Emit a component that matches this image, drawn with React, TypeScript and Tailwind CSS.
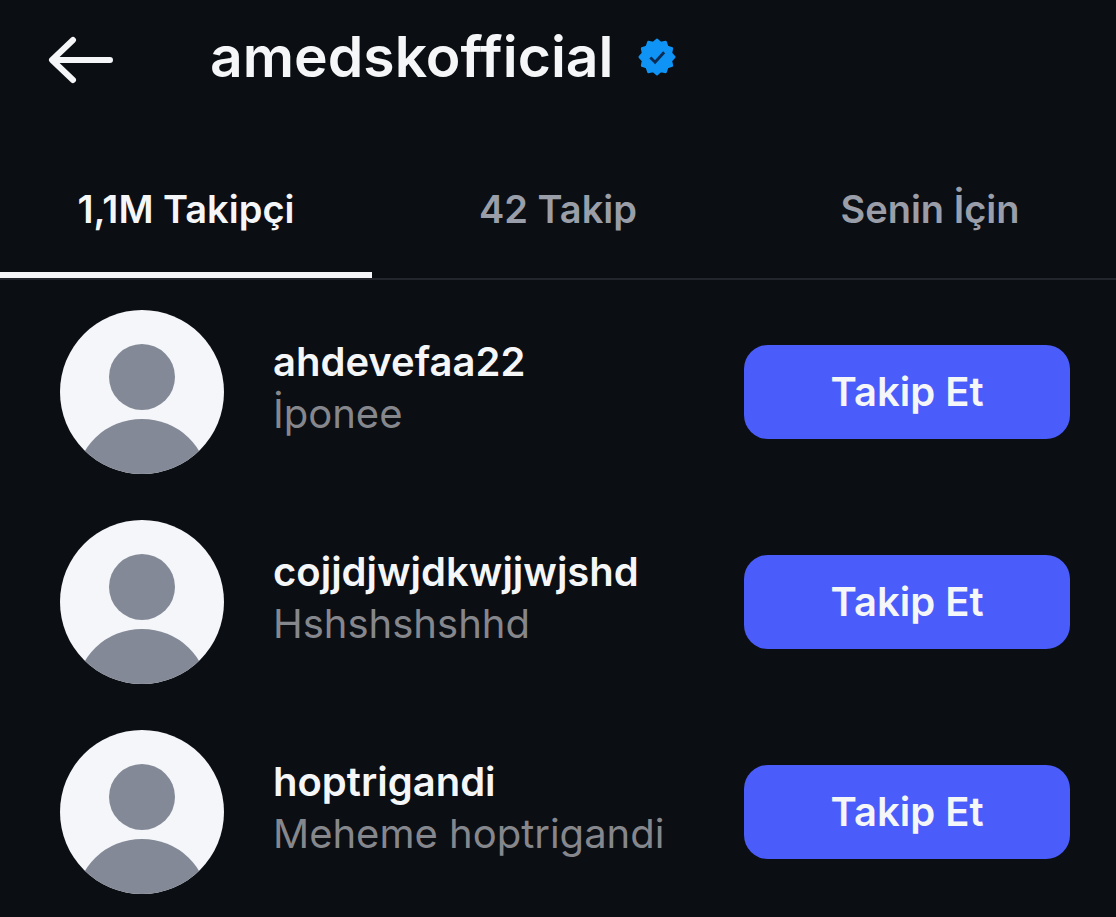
import { useState } from 'react';

const tabs = ["1,1M Takipçi", "42 Takip", "Senin İçin"];

const followers = [
  { username: "ahdevefaa22", name: "İponee" },
  { username: "cojjdjwjdkwjjwjshd", name: "Hshshshshhd" },
  { username: "hoptrigandi", name: "Meheme hoptrigandi" },
];

function BackArrow() {
  return (
    <svg viewBox="0 0 66 50" className="w-[66px] h-[50px]" fill="none" stroke="currentColor" strokeWidth="6" strokeLinecap="round" strokeLinejoin="round">
      <path d="M62 25H5M25 5L4 25l21 20" />
    </svg>
  );
}

function VerifiedBadge() {
  return (
    <svg viewBox="0 0 40 40" className="w-[38px] h-[38px] shrink-0" role="img" aria-label="Verified">
      <path
        fill="#0f94f5"
        stroke="#0f94f5"
        strokeWidth="2"
        strokeLinejoin="round"
        d="M20 1.500L24 5L29.250 4L31 9L36 10.750L35 16L38.500 20L35 24L36 29.250L31 31L29.250 36L24 35L20 38.500L16 35L10.750 36L9 31L4 29.250L5 24L1.500 20L5 16L4 10.750L9 9L10.750 4L16 5Z"
      />
      <path d="M13 20.500l5 5 9.500-10.500" fill="none" stroke="#0b2d55" strokeWidth="3" />
    </svg>
  );
}

function Avatar() {
  return (
    <svg viewBox="0 0 164 164" className="size-41 rounded-full shrink-0" aria-hidden="true">
      <rect width="164" height="164" fill="#f5f6f9" />
      <circle cx="82" cy="67" r="33" fill="#838996" />
      <ellipse cx="82" cy="173" rx="66" ry="64" fill="#838996" />
    </svg>
  );
}

export default function App() {
  const [activeTab, setActiveTab] = useState(0);

  return (
    <div className="min-h-screen bg-[#0b0e13] text-[#f5f6f8] font-['Inter','Noto_Sans',sans-serif]">
      <header className="flex items-center h-40 px-12 pb-10">
        <button aria-label="Back" className="mr-24">
          <BackArrow />
        </button>
        <div className="flex items-center gap-6 pb-1.5">
          <h1 className="text-[57px] leading-16 font-semibold">amedskofficial</h1>
          <VerifiedBadge />
        </div>
      </header>

      <nav className="grid grid-cols-3 border-b-2 border-[#22252b]">
        {tabs.map((tab, idx) => (
          <button
            key={tab}
            onClick={() => setActiveTab(idx)}
            className={`h-[118px] pb-3.5 text-[38px] font-semibold border-b-6 ${
              activeTab === idx ? "border-[#f5f6f8]" : "border-transparent text-[#9a9ea8]"
            }`}
          >
            {tab}
          </button>
        ))}
      </nav>

      <ul className="pt-[30px]">
        {followers.map((user) => (
          <li key={user.username} className="flex items-center h-41 mb-[46px] pl-15 pr-[46px]">
            <Avatar />
            <div className="flex-1 min-w-0 pl-[49px] pb-2">
              <p className="text-[40px] leading-13 font-semibold">{user.username}</p>
              <p className="text-[40px] leading-13 text-[#85878c]">{user.name}</p>
            </div>
            <button className="w-[326px] h-[94px] shrink-0 rounded-3xl bg-[#4a5dfa] text-[40px] font-semibold">
              Takip Et
            </button>
          </li>
        ))}
      </ul>
    </div>
  );
}
